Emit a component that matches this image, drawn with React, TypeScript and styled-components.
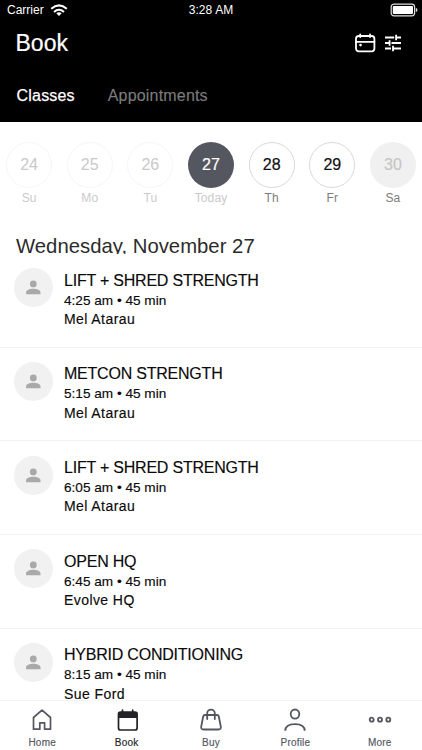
import React from "react";
import styled, { createGlobalStyle } from "styled-components";

const GlobalStyle = createGlobalStyle`
  *, *::before, *::after { box-sizing: border-box; }
  body { margin: 0; background: #fff; }
`;

const Screen = styled.main`
  width: 422px;
  height: 750px;
  display: flex;
  flex-direction: column;
  overflow: hidden;
  background: #fff;
  color: #0a0a0a;
  font-family: "Liberation Sans", Arial, sans-serif;
  white-space: nowrap;
`;

const Header = styled.header`
  height: 122px;
  flex: none;
  background: #000;
  color: #fff;
  display: flex;
  flex-direction: column;
`;

const StatusBar = styled.div`
  height: 20px;
  display: grid;
  grid-template-columns: 1fr auto 1fr;
  align-items: center;
  padding: 0 4px 0 7px;
  font-size: 12px;
  line-height: 20px;
`;

const Carrier = styled.div`
  display: flex;
  align-items: center;
  gap: 6px;
`;

const Clock = styled.div`
  padding-right: 3px;
  letter-spacing: 0.1px;
`;

const Battery = styled.div`
  display: flex;
  justify-content: flex-end;
  svg { display: block; }
`;

const TitleBar = styled.div`
  height: 46px;
  display: flex;
  align-items: center;
  justify-content: space-between;
  padding: 0 20px 0 15.5px;
`;

const PageTitle = styled.h1`
  margin: 0;
  font-size: 23px;
  font-weight: 400;
  line-height: 28px;
  -webkit-text-stroke: 0.2px;
`;

const Actions = styled.div`
  display: flex;
  align-items: center;
  gap: 8px;
  svg { display: block; }
`;

const Tabs = styled.nav`
  display: flex;
  gap: 33px;
  padding: 19px 0 0 16.6px;
`;

const Tab = styled.span<{ $active?: boolean }>`
  font-size: 16px;
  line-height: 22px;
  letter-spacing: 0.18px;
  color: ${(p) => (p.$active ? "#fff" : "#7d7d7d")};
  -webkit-text-stroke: ${(p) => (p.$active ? "0.25px" : "0.1px")};
`;

const Week = styled.section`
  flex: none;
  height: 103px;
  display: grid;
  grid-template-columns: repeat(7, 60.65px);
  justify-content: center;
  padding-top: 20px;
`;

type DayKind = "past" | "today" | "open" | "closed";

const DayCell = styled.div`
  display: flex;
  flex-direction: column;
  align-items: center;
`;

const circleLook: Record<DayKind, string> = {
  past: "border: 1px solid #f6f6f6; color: #c9c9c9;",
  today: "background: #545660; color: #fff;",
  open: "border: 1px solid #d9d9d9; color: #111;",
  closed: "background: #f0f0f0; color: #c6c6c6;",
};

const DayCircle = styled.div<{ $kind: DayKind }>`
  width: 46px;
  height: 46px;
  border-radius: 50%;
  display: flex;
  align-items: center;
  justify-content: center;
  font-size: 16px;
  -webkit-text-stroke: ${(p) => (p.$kind === "past" ? "0" : "0.2px")};
  ${(p) => circleLook[p.$kind]}
`;

const DayName = styled.div<{ $kind: DayKind }>`
  margin-top: 2px;
  font-size: 12px;
  line-height: 17px;
  letter-spacing: 0.1px;
  color: ${(p) => (p.$kind === "past" || p.$kind === "today" ? "#cacaca" : "#7d7d7d")};
`;

const DateHeading = styled.h2`
  flex: none;
  height: 29px;
  margin: 0;
  padding: 7px 16px 0;
  overflow: hidden;
  font-size: 20.3px;
  line-height: 29px;
  font-weight: 400;
  letter-spacing: 0.02px;
  color: #2b2b2b;
`;

const ClassList = styled.div`
  flex: 1;
  min-height: 0;
  overflow: hidden;
`;

const ClassRow = styled.article`
  height: 93.7px;
  display: flex;
  gap: 11px;
  padding: 14.4px 14px 0;
  border-bottom: 1px solid #f1f1f1;
`;

const Avatar = styled.div`
  width: 39px;
  height: 39px;
  flex: none;
  border-radius: 50%;
  background: #f1f1f1;
  display: flex;
  align-items: center;
  justify-content: center;
`;

const ClassInfo = styled.div`
  padding-top: 1.2px;
`;

const ClassName = styled.h3`
  margin: 0 0 1px;
  font-size: 16px;
  line-height: 21px;
  font-weight: 400;
  letter-spacing: -0.22px;
  -webkit-text-stroke: 0.15px;
`;

const ClassMeta = styled.p<{ $wide?: boolean }>`
  margin: 0;
  font-size: ${(p) => (p.$wide ? "14px" : "13.6px")};
  line-height: 18.5px;
  letter-spacing: ${(p) => (p.$wide ? "0.42px" : "0")};
  -webkit-text-stroke: 0.15px;
`;

const TabBar = styled.footer`
  height: 50px;
  flex: none;
  display: grid;
  grid-template-columns: repeat(5, 1fr);
  border-top: 1px solid #f4f4f4;
  background: #fff;
`;

const TabItem = styled.div<{ $active?: boolean }>`
  display: flex;
  flex-direction: column;
  align-items: center;
  padding-top: 7px;
  color: ${(p) => (p.$active ? "#22232a" : "#545660")};
  svg { display: block; }
`;

const TabLabel = styled.span`
  margin-top: 4px;
  font-size: 10px;
  line-height: 13px;
  letter-spacing: 0.2px;
  -webkit-text-stroke: 0.15px;
`;

const WifiIcon = () => (
  <svg width="18" height="13" viewBox="0 0 18 13" fill="none" stroke="#fff" strokeWidth="2">
    <path d="M1.2 4.8Q9-2 16.8 4.8" />
    <path d="M4 8Q9 3.6 14 8" />
    <path d="M9 12 6.3 9.3Q9 7.3 11.7 9.3Z" fill="#fff" stroke="none" />
  </svg>
);

const BatteryIcon = () => (
  <svg width="28" height="14" viewBox="0 0 28 14" fill="none">
    <rect x="1.2" y="1.2" width="23.4" height="11.6" rx="2.8" stroke="#ddd" strokeWidth="1.2" />
    <rect x="2.8" y="2.9" width="20.2" height="8.2" rx="1" fill="#fff" />
    <path d="M25.8 4.8q1.7.7 1.7 2.2t-1.7 2.2z" fill="#ddd" />
  </svg>
);

const CalendarIcon = () => (
  <svg width="22" height="20" viewBox="0 0 22 20" fill="none" stroke="#fff" strokeWidth="1.8" strokeLinecap="round">
    <rect x="2" y="3" width="18.4" height="15.4" rx="2.8" />
    <path d="M2 8.8h18.4M6.2 1.3V4M16 1.3V4" />
    <circle cx="6.5" cy="12.1" r="1.3" fill="#fff" stroke="none" />
  </svg>
);

const TuneIcon = () => (
  <svg width="18" height="18" viewBox="0 0 18 18" fill="none" stroke="#fff" strokeWidth="1.8">
    <path d="M1 3.5h9.2M12.2 3.5H17M12.1.8v5.4M1 9h4.5M7.5 9H17M5.6 6.3v5.4M1 14.5h6M9 14.5h8M9 11.8v5.4" />
  </svg>
);

const PersonIcon = () => (
  <svg width="15" height="15" viewBox="0 0 15 15" fill="#a9a9a9">
    <circle cx="7.3" cy="3.9" r="3.4" />
    <path d="M.1 14.3v-1.9C.1 9.9 3.8 8.7 7.3 8.7s7.2 1.2 7.2 3.7v1.9z" />
  </svg>
);

const HomeIcon = () => (
  <svg width="24" height="24" viewBox="0 0 24 24" fill="none" stroke="currentColor" strokeWidth="1.7" strokeLinejoin="round">
    <path d="M3.5 9.5 12 2.2l8.5 7.3v11.7h-5.9v-6.4H9.8v6.4H3.5z" />
  </svg>
);

const BookIcon = () => (
  <svg width="24" height="24" viewBox="0 0 24 24" fill="none" stroke="currentColor" strokeWidth="1.7" strokeLinecap="round">
    <rect x="3.5" y="4" width="18.6" height="18" rx="2" />
    <path d="M3.5 4h18.6v6H3.5z" fill="currentColor" stroke="none" />
    <path d="M7.5 2.2v3M17.7 2.2v3" />
  </svg>
);

const BuyIcon = () => (
  <svg width="24" height="24" viewBox="0 0 24 24" fill="none" stroke="currentColor" strokeWidth="1.8" strokeLinejoin="round" strokeLinecap="round">
    <path d="M6 7h12q1.5 0 1.8 1.5l2 10.2q.4 2.8-2.3 2.8H4.5q-2.7 0-2.3-2.8l2-10.2Q4.500 7 6 7z" />
    <path d="M8.200 11V5.300a3.800 3.700 0 0 1 7.600 0V11" />
  </svg>
);

const ProfileIcon = () => (
  <svg width="24" height="24" viewBox="0 0 24 24" fill="none" stroke="currentColor" strokeWidth="1.8">
    <ellipse cx="12" cy="6.1" rx="4.3" ry="4.6" />
    <path d="M2.3 22.8c0-4.2 3.6-6.7 9.7-6.7s9.7 2.5 9.7 6.7" />
  </svg>
);

const MoreIcon = () => (
  <svg width="24" height="24" viewBox="0 0 24 24" fill="none" stroke="currentColor" strokeWidth="1.8">
    <circle cx="3.7" cy="11.7" r="2" />
    <circle cx="12" cy="11.7" r="2" />
    <circle cx="20.3" cy="11.7" r="2" />
  </svg>
);

const days: { date: number; name: string; kind: DayKind }[] = [
  { date: 24, name: "Su", kind: "past" },
  { date: 25, name: "Mo", kind: "past" },
  { date: 26, name: "Tu", kind: "past" },
  { date: 27, name: "Today", kind: "today" },
  { date: 28, name: "Th", kind: "open" },
  { date: 29, name: "Fr", kind: "open" },
  { date: 30, name: "Sa", kind: "closed" },
];

const classes = [
  { title: "LIFT + SHRED STRENGTH", time: "4:25 am", coach: "Mel Atarau" },
  { title: "METCON STRENGTH", time: "5:15 am", coach: "Mel Atarau" },
  { title: "LIFT + SHRED STRENGTH", time: "6:05 am", coach: "Mel Atarau" },
  { title: "OPEN HQ", time: "6:45 am", coach: "Evolve HQ" },
  { title: "HYBRID CONDITIONING", time: "8:15 am", coach: "Sue Ford" },
];

const tabs = [
  { label: "Home", Icon: HomeIcon },
  { label: "Book", Icon: BookIcon, active: true },
  { label: "Buy", Icon: BuyIcon },
  { label: "Profile", Icon: ProfileIcon },
  { label: "More", Icon: MoreIcon },
];

export default function App() {
  return (
    <Screen>
      <GlobalStyle />
      <Header>
        <StatusBar>
          <Carrier>Carrier <WifiIcon /></Carrier>
          <Clock>3:28 AM</Clock>
          <Battery><BatteryIcon /></Battery>
        </StatusBar>
        <TitleBar>
          <PageTitle>Book</PageTitle>
          <Actions><CalendarIcon /><TuneIcon /></Actions>
        </TitleBar>
        <Tabs>
          <Tab $active>Classes</Tab>
          <Tab>Appointments</Tab>
        </Tabs>
      </Header>
      <Week>
        {days.map((d) => (
          <DayCell key={d.date}>
            <DayCircle $kind={d.kind}>{d.date}</DayCircle>
            <DayName $kind={d.kind}>{d.name}</DayName>
          </DayCell>
        ))}
      </Week>
      <DateHeading>Wednesday, November 27</DateHeading>
      <ClassList>
        {classes.map((c) => (
          <ClassRow key={c.time}>
            <Avatar><PersonIcon /></Avatar>
            <ClassInfo>
              <ClassName>{c.title}</ClassName>
              <ClassMeta>{c.time} • 45 min</ClassMeta>
              <ClassMeta $wide>{c.coach}</ClassMeta>
            </ClassInfo>
          </ClassRow>
        ))}
      </ClassList>
      <TabBar>
        {tabs.map(({ label, Icon, active }) => (
          <TabItem key={label} $active={active}>
            <Icon />
            <TabLabel>{label}</TabLabel>
          </TabItem>
        ))}
      </TabBar>
    </Screen>
  );
}
